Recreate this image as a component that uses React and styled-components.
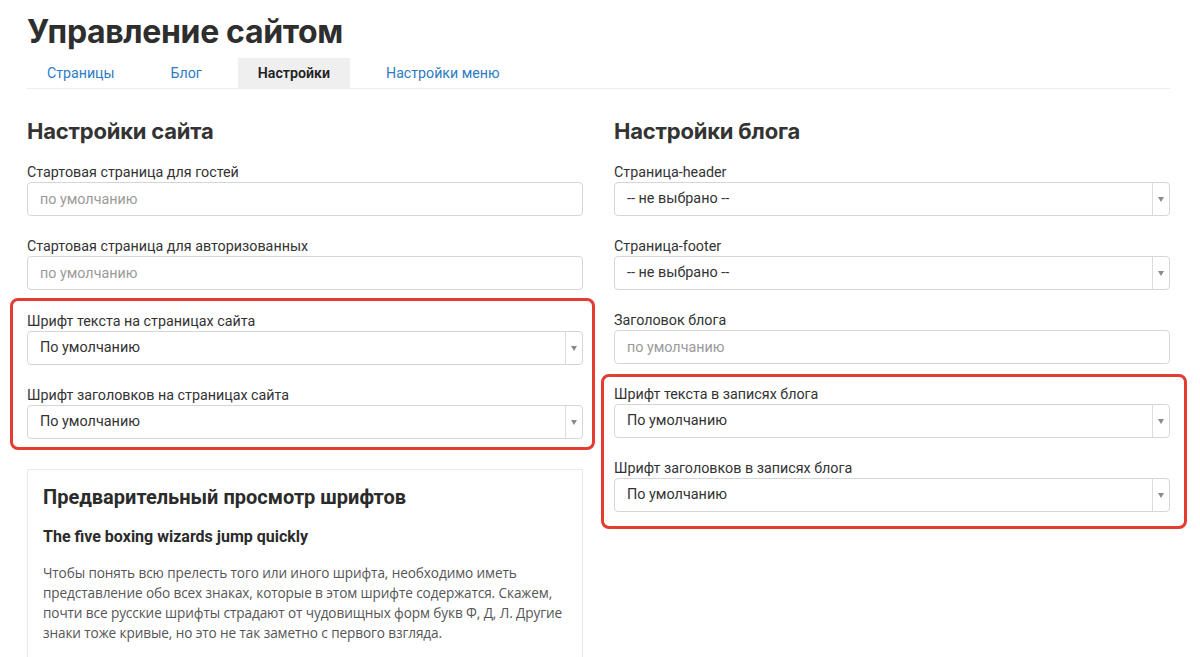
import React from "react";
import styled, { createGlobalStyle } from "styled-components";

const GlobalStyle = createGlobalStyle`
  body {
    margin: 0;
    background: #fff;
    font-family: Roboto, "Liberation Sans", Arial, sans-serif;
    color: #333;
  }
`;

const Page = styled.div`
  width: 1143px;
  padding: 12px 0 0 27px;
`;

const Title = styled.h1`
  margin: 0;
  font-family: Inter, Roboto, sans-serif;
  font-size: 32px;
  line-height: 40px;
  font-weight: 700;
  color: #2e2e2e;
  letter-spacing: -0.35px;
`;

const Tabs = styled.nav`
  display: flex;
  gap: 16px;
  margin-top: 6px;
  border-bottom: 1px solid #ececec;
`;

const Tab = styled.a`
  display: block;
  height: 30px;
  line-height: 30px;
  padding: 0 20px;
  font-size: 14.2px;
  text-decoration: none;
  color: ${(p) => (p.$active ? "#222" : "#2c7bc3")};
  font-weight: ${(p) => (p.$active ? 600 : 400)};
  background: ${(p) => (p.$active ? "#efefef" : "transparent")};
`;

const Columns = styled.div`
  display: grid;
  grid-template-columns: 556px 556px;
  column-gap: 31px;
  margin-top: 28px;
`;

const Column = styled.section`
  display: flex;
  flex-direction: column;
`;

const SectionTitle = styled.h2`
  margin: 0 0 17px;
  font-family: Inter, Roboto, sans-serif;
  font-size: 22px;
  line-height: 28px;
  font-weight: 700;
  color: #333;
  letter-spacing: -0.2px;
`;

const FieldList = styled.div`
  display: flex;
  flex-direction: column;
  gap: 20px;
`;

const Field = styled.div`
  display: flex;
  flex-direction: column;
`;

const Label = styled.label`
  font-size: 14.3px;
  line-height: 20px;
  color: #333;
`;

const TextInput = styled.input`
  box-sizing: border-box;
  width: 100%;
  height: 34px;
  margin: 0;
  padding: 0 12px;
  border: 1px solid #d6d6d6;
  border-radius: 4px;
  font-family: inherit;
  font-size: 14.3px;
  color: #333;
  outline: none;
  &::placeholder {
    color: #9a9a9a;
  }
`;

const SelectBox = styled.div`
  box-sizing: border-box;
  display: flex;
  height: 34px;
  border: 1px solid #d6d6d6;
  border-radius: 4px;
  font-size: 14.4px;
  color: #333;
`;

const SelectValue = styled.span`
  flex: 1;
  padding-left: 12px;
  line-height: 32px;
`;

const SelectArrow = styled.span`
  width: 16px;
  border-left: 1px solid #dcdcdc;
  display: flex;
  align-items: center;
  justify-content: center;
  &::after {
    content: "";
    border-left: 3.5px solid transparent;
    border-right: 3.5px solid transparent;
    border-top: 5px solid #8a8a8a;
  }
`;

const Highlight = styled.div`
  display: flex;
  flex-direction: column;
  gap: 20px;
  border: 3px solid #e53b30;
  border-radius: 8px;
  margin: ${(p) => `${p.$mt}px -${p.$right}px 0 -${p.$left}px`};
  padding: ${(p) => `${p.$pt}px ${p.$right - 3}px ${p.$pb}px ${p.$left - 3}px`};
`;

const Preview = styled.div`
  margin-top: 19px;
  border: 1px solid #e9e9e9;
  padding: 13px 15px 20px 15px;
`;

const PreviewTitle = styled.h3`
  margin: 0;
  font-size: 20px;
  line-height: 28px;
  font-weight: 700;
  color: #2b2b2b;
`;

const PreviewSubtitle = styled.h4`
  margin: 15px 0 0;
  font-size: 16px;
  line-height: 22px;
  font-weight: 700;
  color: #2b2b2b;
`;

const PreviewText = styled.p`
  margin: 15px 0 0;
  font-family: "Open Sans", "Liberation Sans", sans-serif;
  font-size: 13.6px;
  line-height: 20px;
  color: #555;
  letter-spacing: -0.1px;
`;

const InputField = ({ label, placeholder }) => (
  <Field>
    <Label>{label}</Label>
    <TextInput placeholder={placeholder} readOnly />
  </Field>
);

const SelectField = ({ label, value }) => (
  <Field>
    <Label>{label}</Label>
    <SelectBox>
      <SelectValue>{value}</SelectValue>
      <SelectArrow />
    </SelectBox>
  </Field>
);

export default function App() {
  return (
    <>
      <GlobalStyle />
      <Page>
        <Title>Управление сайтом</Title>
        <Tabs>
          <Tab href="#">Страницы</Tab>
          <Tab href="#">Блог</Tab>
          <Tab $active>Настройки</Tab>
          <Tab href="#">Настройки меню</Tab>
        </Tabs>
        <Columns>
          <Column>
            <SectionTitle>Настройки сайта</SectionTitle>
            <FieldList>
              <InputField label="Стартовая страница для гостей" placeholder="по умолчанию" />
              <InputField label="Стартовая страница для авторизованных" placeholder="по умолчанию" />
              <Highlight $mt={-12} $pt={10} $pb={8} $left={17} $right={12}>
                <SelectField label="Шрифт текста на страницах сайта" value="По умолчанию" />
                <SelectField label="Шрифт заголовков на страницах сайта" value="По умолчанию" />
              </Highlight>
            </FieldList>
            <Preview>
              <PreviewTitle>Предварительный просмотр шрифтов</PreviewTitle>
              <PreviewSubtitle>The five boxing wizards jump quickly</PreviewSubtitle>
              <PreviewText>
                Чтобы понять всю прелесть того или иного шрифта, необходимо иметь
                представление обо всех знаках, которые в этом шрифте содержатся. Скажем,
                почти все русские шрифты страдают от чудовищных форм букв Ф, Д, Л. Другие
                знаки тоже кривые, но это не так заметно с первого взгляда.
              </PreviewText>
            </Preview>
          </Column>
          <Column>
            <SectionTitle>Настройки блога</SectionTitle>
            <FieldList>
              <SelectField label="Страница-header" value="-- не выбрано --" />
              <SelectField label="Страница-footer" value="-- не выбрано --" />
              <InputField label="Заголовок блога" placeholder="по умолчанию" />
              <Highlight $mt={-10} $pt={7} $pb={14} $left={13} $right={17}>
                <SelectField label="Шрифт текста в записях блога" value="По умолчанию" />
                <SelectField label="Шрифт заголовков в записях блога" value="По умолчанию" />
              </Highlight>
            </FieldList>
          </Column>
        </Columns>
      </Page>
    </>
  );
}
